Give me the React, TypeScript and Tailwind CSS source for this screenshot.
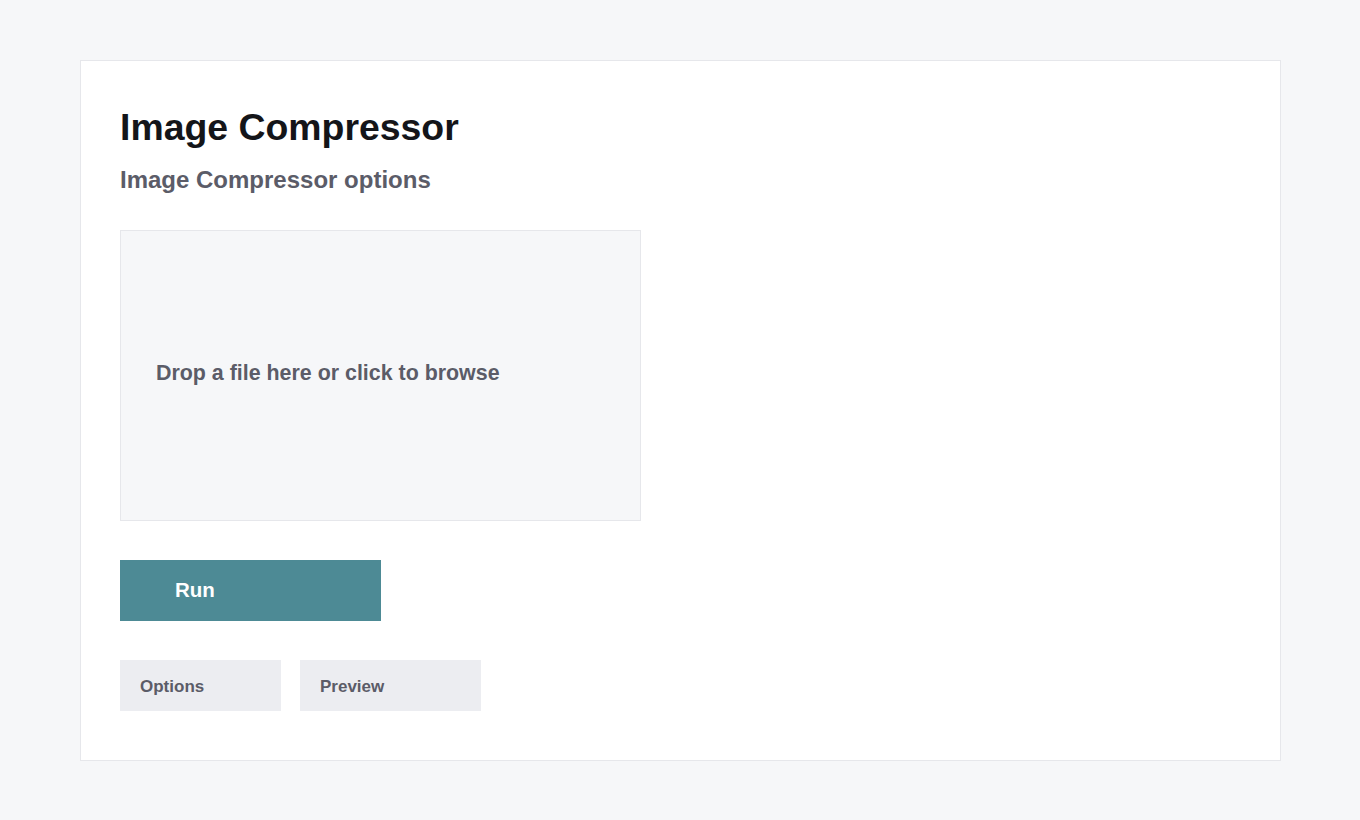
export default function App() {
  return (
    <div className="min-h-screen bg-[#f6f7f9] pl-20 pr-[79px] pt-[60px] pb-[60px] font-['Liberation_Sans',Arial,sans-serif]">
      <div className="h-[701px] border border-[#e6e7eb] bg-white px-[39px] pt-[44px]">
        <h1 className="text-[37.4px] leading-[1.2] font-bold text-[#141519]">Image Compressor</h1>
        <h2 className="mt-4 text-[24px] leading-[1.2] font-bold text-[#5b5c68]">Image Compressor options</h2>

        <div className="mt-[35px] flex h-[291px] w-[521px] items-center border border-[#e6e7eb] bg-[#f6f7f9] px-[35px] pb-1">
          <span className="text-[21.4px] font-bold text-[#5b5c68]">Drop a file here or click to browse</span>
        </div>

        <button className="mt-[39px] flex h-[61px] w-[261px] items-center bg-[#4d8a95] pl-[55px] text-[20.5px] font-bold text-white">
          Run
        </button>

        <div className="mt-[39px] flex gap-[19px]">
          <button className="flex h-[51px] w-[161px] items-center bg-[#ecedf1] pt-1 pl-5 text-[17px] font-bold text-[#5b5c68]">
            Options
          </button>
          <button className="flex h-[51px] w-[181px] items-center bg-[#ecedf1] pt-1 pl-5 text-[17px] font-bold text-[#5b5c68]">
            Preview
          </button>
        </div>
      </div>
    </div>
  );
}
